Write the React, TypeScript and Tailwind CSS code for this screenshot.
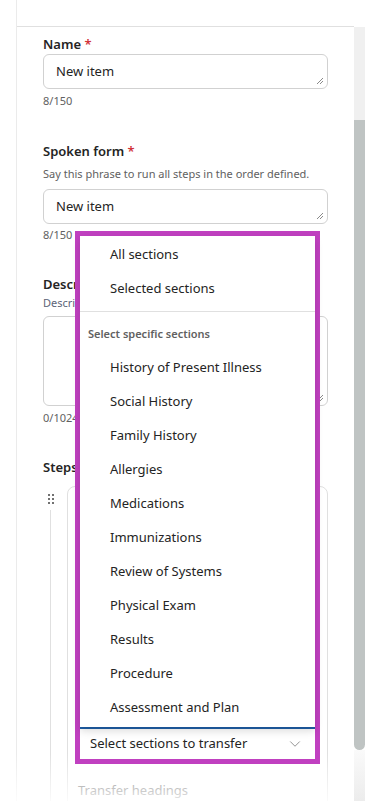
import { ChevronDown } from "lucide-react";

const sections = [
  "History of Present Illness",
  "Social History",
  "Family History",
  "Allergies",
  "Medications",
  "Immunizations",
  "Review of Systems",
  "Physical Exam",
  "Results",
  "Procedure",
  "Assessment and Plan",
];

function Field({ h, value }: { h: number; value?: string }) {
  return (
    <div
      className="relative rounded-[6px] border border-[#d1d1d1] bg-white px-[12px] pt-[6px] text-[13px] leading-[20px] text-[#242424]"
      style={{ height: h }}
    >
      {value}
      <svg viewBox="0 0 8 8" className="absolute bottom-[3px] right-[3px] h-[8px] w-[8px]" stroke="#8a8a8a" strokeWidth="1">
        <path d="M7 1L1 7M7 4L4 7" />
      </svg>
    </div>
  );
}

export default function App() {
  return (
    <div
      className="relative h-[801px] w-[365px] overflow-hidden bg-white text-[#242424]"
      style={{ fontFamily: '"Noto Sans", "Open Sans", sans-serif' }}
    >
      <div className="flex h-full">
        <div className="w-[16px] shrink-0" />
        <div className="flex min-w-0 flex-1 flex-col border-l border-[#ebebeb]">
          <div className="h-[27px] shrink-0 border-b border-[#e0e0e0]" />
          <div className="pl-[26px] pr-[26px] pt-[7px]">
            <div className="h-[20px] text-[13px] font-semibold leading-[20px]">
              Name <span className="text-[#d13438]">*</span>
            </div>
            <Field h={35} value="New item" />
            <div className="mt-[4px] h-[16px] text-[11px] leading-[16px] text-[#616161]">8/150</div>

            <div className="mt-[32px] h-[20px] text-[13px] font-semibold leading-[20px]">
              Spoken form <span className="text-[#d13438]">*</span>
            </div>
            <div className="mt-[5px] h-[16px] whitespace-nowrap text-[11px] leading-[16px] text-[#616161]">
              Say this phrase to run all steps in the order defined.
            </div>
            <div className="mt-[7px]">
              <Field h={35} value="New item" />
            </div>
            <div className="mt-[3px] h-[16px] text-[11px] leading-[16px] text-[#616161]">8/150</div>

            <div className="mt-[31px] h-[20px] text-[13px] font-semibold leading-[20px]">Description</div>
            <div className="mt-[1px] h-[16px] text-[11px] leading-[16px] text-[#5c6478]">Describe what this does</div>
            <div className="mt-[5px]">
              <Field h={90} />
            </div>
            <div className="mt-[4px] h-[16px] text-[11px] leading-[16px] text-[#616161]">0/1024</div>

            <div className="mt-[31px] h-[20px] text-[13px] font-semibold leading-[20px]">Steps</div>
            <div className="mt-[9px] flex">
              <div className="flex w-[24px] shrink-0 flex-col items-start pl-[4px]">
                <svg viewBox="0 0 8 12" className="mt-[7px] h-[12px] w-[8px]" fill="#424242">
                  <circle cx="2" cy="2" r="1" />
                  <circle cx="6" cy="2" r="1" />
                  <circle cx="2" cy="6" r="1" />
                  <circle cx="6" cy="6" r="1" />
                  <circle cx="2" cy="10" r="1" />
                  <circle cx="6" cy="10" r="1" />
                </svg>
                <div className="ml-[3px] mt-[5px] h-[300px] w-px bg-[#e0e0e0]" />
              </div>
              <div className="h-[340px] flex-1 rounded-[8px] border border-[#e0e0e0] px-[10px] pt-[294px]">
                <div className="text-[13px] text-[#616161]">Transfer headings</div>
              </div>
            </div>
          </div>
        </div>
        <div className="flex w-[11px] shrink-0 flex-col pt-[27px]">
          <div className="h-[93px] bg-[#f0f0f0]" />
          <div className="h-[630px] rounded-b-[6px] bg-[#bfc4c3]" />
          <div className="flex-1 bg-gradient-to-b from-[#fafafa] to-[#ececec]" />
        </div>
      </div>

      {/* bottom fade */}
      <div className="absolute bottom-0 left-0 right-[11px] h-[48px] bg-gradient-to-b from-white/0 to-white/85" />

      {/* open dropdown */}
      <div className="absolute left-[75px] top-[231px] flex h-[533px] w-[245px] flex-col border-[5px] border-[#c040c0] bg-white">
        <div className="relative z-10 bg-white pt-[2px] shadow-[0_4px_8px_rgba(0,0,0,0.14)]">
          {["All sections", "Selected sections"].map((s) => (
            <div key={s} className="flex h-[34px] items-center pl-[30px] text-[13px] text-[#242424]">
              {s}
            </div>
          ))}
          <div className="my-[5px] h-px bg-[#e0e0e0]" />
          <div className="flex h-[34px] items-center pl-[8px] text-[11px] font-semibold text-[#616161]">
            Select specific sections
          </div>
          {sections.map((s) => (
            <div key={s} className="flex h-[34px] items-center pl-[30px] text-[13px] text-[#242424]">
              {s}
            </div>
          ))}
          <div className="h-[2px]" />
        </div>
        <div className="h-[2px] bg-[#1f5fa8]" />
        <div className="flex flex-1 items-center justify-between pb-[1px] pl-[10px] pr-[11px] text-[13px] text-[#242424]">
          <span>Select sections to transfer</span>
          <ChevronDown size={18} strokeWidth={1} className="text-[#707070]" />
        </div>
      </div>
    </div>
  );
}
